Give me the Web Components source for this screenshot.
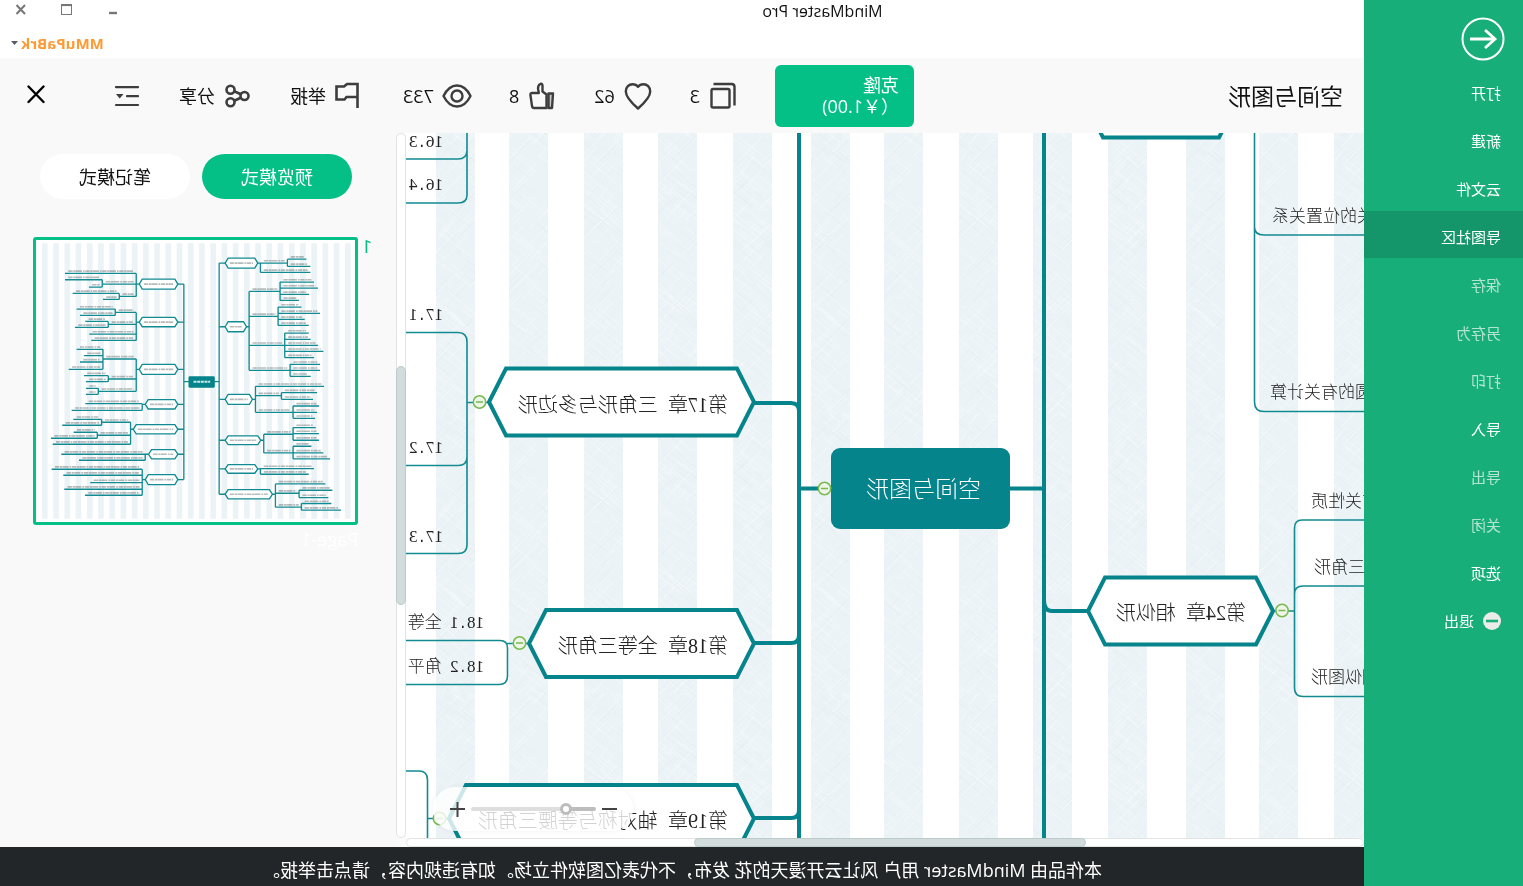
<!DOCTYPE html>
<html lang="zh-CN">
<head>
<meta charset="utf-8">
<title>MindMaster Pro</title>
<style>
  body {
    margin: 0;
    font-family: "Open Sans", "Noto Sans CJK SC", sans-serif;
    color: #111;
    background: #fff;
    transform: scaleX(-1);
  }
</style>
</head>
<body>
<mm-app></mm-app>

<script>
const define = (name, html, setup) => {
  const template = document.createElement('template');
  template.innerHTML = `<style>
    *, *::before, *::after { box-sizing: border-box; }
    button { font: inherit; color: inherit; border: 0; padding: 0; background: none; cursor: pointer; }
    svg { display: block; }
  </style>` + html;
  customElements.define(name, class extends HTMLElement {
    constructor() {
      super();
      this.attachShadow({ mode: 'open' }).append(template.content.cloneNode(true));
    }
    connectedCallback() { if (setup) setup(this, this.shadowRoot); }
  });
};

/* ---------- side menu ---------- */
define('mm-menu-item', `
  <style>
    :host { display: block; height: 48px; }
    a { display: flex; align-items: center; gap: 9px; height: 47px; padding: 5px 0 0 22px;
        font-size: 15px; line-height: 20px; color: #fff; text-decoration: none; }
    :host([active]) a { background: #14956a; }
    :host([disabled]) a { color: #b4e4d2; }
  </style>
  <a href="#"><slot name="icon"></slot><slot></slot></a>`);

define('mm-sidebar', `
  <style>
    :host { display: block; flex: none; width: 159px; background: #17ae79; }
    .back { display: block; margin: 17px 0 6px 18px; width: 44px; height: 44px; }
    nav { display: block; }
  </style>
  <button class="back" aria-label="返回">
    <svg width="44" height="44" viewBox="0 0 44 44" fill="none" stroke="#fff">
      <circle cx="22" cy="22" r="20.5" stroke-width="2"/>
      <path d="M35 22H10M20 13L10 22l10 9" stroke-width="2.8"/>
    </svg>
  </button>
  <nav>
    <mm-menu-item>打开</mm-menu-item>
    <mm-menu-item>新建</mm-menu-item>
    <mm-menu-item>云文件</mm-menu-item>
    <mm-menu-item active>导图社区</mm-menu-item>
    <mm-menu-item disabled>保存</mm-menu-item>
    <mm-menu-item disabled>另存为</mm-menu-item>
    <mm-menu-item disabled>打印</mm-menu-item>
    <mm-menu-item>导入</mm-menu-item>
    <mm-menu-item disabled>导出</mm-menu-item>
    <mm-menu-item disabled>关闭</mm-menu-item>
    <mm-menu-item>选项</mm-menu-item>
    <mm-menu-item><svg slot="icon" width="18" height="18" viewBox="0 0 18 18"><circle cx="9" cy="9" r="9" fill="#ebebeb"/><path d="M3 9h12" stroke="#17ae79" stroke-width="2.6"/></svg>退出</mm-menu-item>
  </nav>`);

/* ---------- title bar ---------- */
define('mm-titlebar', `
  <style>
    :host { display: flex; height: 58px; background: #fff; }
    h1 { flex: 1; margin: 0; text-align: center; font-size: 16px; font-weight: 400; line-height: 22px; }
    .side { width: 281px; display: flex; flex-direction: column; align-items: flex-end; }
    .controls { display: flex; align-items: center; gap: 33px; height: 20px; padding-right: 15px; }
    .controls button { width: 12px; height: 12px; }
    .user { display: flex; align-items: center; gap: 2px; margin-top: 13px; padding-right: 10px;
            font-size: 15px; line-height: 20px; font-weight: 700; color: #fd9a35; }
  </style>
  <h1>MindMaster Pro</h1>
  <div class="side">
    <div class="controls">
      <button aria-label="最小化"><svg width="12" height="12"><path d="M0 9h8" stroke="#777" stroke-width="2.4"/></svg></button>
      <button aria-label="最大化"><svg width="12" height="12" fill="none" stroke="#777"><rect x=".5" y=".5" width="10" height="10"/><path d="M0 1.3h11" stroke-width="1.6"/></svg></button>
      <button aria-label="关闭窗口"><svg width="12" height="12"><path d="M2 1l8.500 9M10.500 1L2 10" stroke="#777" stroke-width="2"/></svg></button>
    </div>
    <button class="user">MMuPaBrk<svg width="9" height="5"><path d="M1 0h7L4.500 4z" fill="#555c66"/></svg></button>
  </div>`);

/* ---------- header ---------- */
define('mm-tool', `
  <style>
    :host { display: block; }
    button { display: flex; align-items: center; gap: 8px; font-size: 18px; line-height: 26px; height: 30px; }
    ::slotted(svg) { display: block; width: 30px; height: 30px; fill: none; stroke: #3d3d3d; stroke-width: 2.4; stroke-linejoin: round; }
  </style>
  <button><slot name="icon"></slot><slot></slot></button>`);

define('mm-header', `
  <style>
    :host { display: flex; align-items: center; height: 75px; padding: 0 25px 0 21px; background: #f9f9f9; }
    h2 { flex: 1; margin: 0; font-size: 23px; line-height: 30px; font-weight: 400; }
    .clone { width: 139px; height: 62px; margin-right: 37px; padding: 0 15px; border-radius: 6px; background: #04bf86;
             color: #fff; font-size: 18px; line-height: 21px; text-align: left; white-space: nowrap; }
    .group { display: flex; gap: 37px; margin-right: 39px; }
    .group + .group { margin-right: 0; }
    .close { margin-left: 65px; width: 22px; height: 22px; }
    .outline { width: 30px; height: 30px; }
  </style>
  <h2>空间与图形</h2>
  <button class="clone">克隆<br>（￥1.00)</button>
  <div class="group">
    <mm-tool><svg slot="icon" viewBox="0 0 30 30"><rect x="8.500" y="8" width="18" height="18.500" rx="1.500"/><path d="M3.500 24.500V6q0-3 3-3H24.500"/></svg>3</mm-tool>
    <mm-tool><svg slot="icon" viewBox="0 0 30 30"><path d="M15 27.500C11 24 2.800 17 2.800 10.500C2.800 6 6 3.200 9.500 3.200C12 3.200 14 4.400 15 5.800C16 4.400 18 3.200 20.500 3.200C24 3.200 27.200 6 27.200 10.500C27.200 17 19 24 15 27.500Z"/></svg>62</mm-tool>
    <mm-tool><svg slot="icon" viewBox="0 0 30 30"><path d="M4 12.500h4.500V27H5z" fill="#3d3d3d" fill-opacity=".25"/><path d="M10.500 27V13.500l4-3V5q0-2.500 1.800-2.200q2.700.7 2.700 4.700L18.200 12H25q1.800 0 1.600 1.800L25 25q-.3 2-2 2z"/></svg>8</mm-tool>
    <mm-tool><svg slot="icon" viewBox="0 0 30 30"><path d="M1.500 15C5 8 9.500 4.500 15 4.500S25 8 28.500 15C25 22 20.500 25.500 15 25.500S5 22 1.500 15z"/><circle cx="15" cy="15" r="5.500"/></svg>733</mm-tool>
  </div>
  <div class="group">
    <mm-tool><svg slot="icon" viewBox="0 0 30 30" style="stroke-linejoin:miter;stroke-width:2.600"><path d="M6.500 27V3H17L20 5.500H27.500V18.500H19.500L17.500 16H6.500"/></svg>举报</mm-tool>
    <mm-tool><svg slot="icon" viewBox="0 0 30 30" style="stroke-width:2.600"><circle cx="8.500" cy="15" r="4"/><circle cx="22.500" cy="8.800" r="4"/><circle cx="22.500" cy="21.200" r="4"/><path d="M12.200 13.300l6.600-3M12.200 16.700l6.600 3"/></svg>分享</mm-tool>
    <button class="outline" aria-label="大纲"><svg width="30" height="30" viewBox="0 0 30 30"><path d="M4 6.200h22M4 15.200h11M4 24h22" stroke="#3d3d3d" stroke-width="2.200" stroke-linecap="round"/><path d="M18.500 13h7.500l-3.700 4.500z" fill="#3d3d3d"/></svg></button>
  </div>
  <button class="close" aria-label="关闭"><svg width="22" height="22" viewBox="0 0 22 22"><path d="M3.500 1.500l15 15.500M18.500 1.500L3.500 17" stroke="#000" stroke-width="2.400" stroke-linecap="round"/></svg></button>`);

/* ---------- map canvas ---------- */
/* A label whose full stops and spaces take half an em, like its digits. */
define('mm-label', `
  <style>
    :host { position: absolute; font-family: "Liberation Serif", "Noto Sans CJK SC", serif;
            font-size: 17px; line-height: 24px; font-weight: 300; color: #222; }
    span { display: block; white-space: pre; }
    i { font-style: normal; font-family: "Liberation Mono", monospace; font-size: 14px; line-height: 1; }
    :host([kind=chapter]) { font-size: 20px; }
    :host([kind=chapter]) i { font-size: 17px; }
    :host([kind=root]) { font-size: 23px; color: #fff; }
  </style><span></span>`, (host, root) => {
    host.style.left = host.getAttribute('x') + 'px';
    host.style.top = host.getAttribute('y') - 11 + 'px';
    root.querySelector('span').innerHTML = host.getAttribute('text').replace(/[. ]/g, '<i>$&</i>');
  });

define('mm-zoom', `
  <style>
    :host { position: absolute; right: 27px; bottom: 7px; width: 200px; height: 44px; padding: 0 16px;
            display: flex; align-items: center; gap: 6px; border-radius: 22px;
            background: rgba(255,255,255,.8); box-shadow: 0 0 6px rgba(0,0,0,.06); }
    button { width: 15px; height: 15px; flex: none; }
    input { appearance: none; flex: none; width: 125px; height: 12px; margin: 0; background: none; }
    input::-webkit-slider-runnable-track { height: 4px; border-radius: 2px; background: linear-gradient(90deg, #bdbdbd 24%, #dedede 24%); }
    input::-webkit-slider-thumb { appearance: none; width: 12px; height: 12px; margin-top: -4px; border: 3px solid #bdbdbd; border-radius: 50%; background: #fff; }
  </style>
  <button aria-label="缩小"><svg width="15" height="15"><path d="M0 7h15" stroke="#444" stroke-width="2"/></svg></button>
  <input type="range" aria-label="缩放" value="21">
  <button aria-label="放大"><svg width="15" height="15"><path d="M0 7h15M7.500 0v15" stroke="#444" stroke-width="2"/></svg></button>`);

define('mm-scrollbar', `
  <style>
    :host { display: block; position: relative; background: #fff; border: 1px solid #e2e4e4; border-radius: 5px; }
    div { position: absolute; background: #d3dcdd; border: 1px solid #bccaca; border-radius: 5px; inset: -1px; }
  </style><div></div>`, (host, root) => {
    const bar = root.querySelector('div'), from = host.getAttribute('from'), to = host.getAttribute('to');
    if (host.hasAttribute('vertical')) { bar.style.top = from + '%'; bar.style.bottom = 100 - to + '%'; }
    else { bar.style.left = from + '%'; bar.style.right = 100 - to + '%'; }
  });

/* Page background: five bands to a 375px tile, with a fine cross-hatch on each. */
const hatch = () => {
  let seed = 7, d = ['', '', ''];
  const rnd = () => (seed = (seed * 16807) % 2147483647) / 2147483647;
  for (let n = 0; n < 1400; n++) {
    const x = rnd() * 400 - 20, y = rnd() * 320 - 20, l = 8 + rnd() * 20, k = rnd() < .6 ? .8 : -1;
    d[n % 3] += `M${x.toFixed(0)} ${y.toFixed(0)}l${l.toFixed(0)} ${(l * k).toFixed(0)}`;
  }
  return `<path d="${d[0]}${d[1]}" stroke="#fff" stroke-opacity=".3" fill="none"/><path d="${d[2]}" stroke="#e0e9ec" stroke-opacity=".4" fill="none"/>`;
};
const hexagon = (x1, x2, y, h, c) => `M${x1} ${y}L${x1 + c} ${y - h}H${x2 - c}L${x2} ${y}L${x2 - c} ${y + h}H${x1 + c}Z`;
const knob = (x, y) => `<g><circle cx="${x}" cy="${y}" r="6.200" fill="#edf5e8" stroke="#79b94e" stroke-width="1.500"/><path d="M${x - 3.5} ${y}h7" stroke="#79b94e" stroke-width="1.500"/></g>`;

define('mm-canvas', `
  <style>
    :host { display: grid; grid-template: 1fr 9px / 1fr 10px; flex: 1; min-width: 0; background: #fafafa; }
    .view { position: relative; overflow: hidden; background: #fff; }
    svg { position: absolute; inset: 0; width: 100%; height: 100%; }
  </style>
  <div class="view">
    <svg>
      <defs>
        <pattern id="bands" width="375" height="280" patternUnits="userSpaceOnUse" patternTransform="translate(436 133)">
          <clipPath id="strips"><path d="M0 0h39v280H0zM73 0h39v280H73zM148 0h39v280h-39zM222 0h39v280h-39zM297 0h39v280h-39z"/></clipPath>
          <g clip-path="url(#strips)"><rect width="375" height="280" fill="#ecf3f6"/>${hatch()}</g>
        </pattern>
      </defs>
      <g transform="translate(1364 -133) scale(-1 1)">
        <rect x="-2000" y="133" width="3364" height="2000" fill="url(#bands)"/>
        <g fill="none" stroke="#128a91" stroke-width="1.600">
          <path d="M1254.500 133V227Q1254.500 235 1264 235H1364M1254.500 225V402Q1254.500 411.500 1264 411.500H1364"/>
          <path d="M1364 520H1302Q1294.500 520 1294.500 528V688Q1294.500 696.500 1303 696.500H1364M1294.500 594Q1294.500 586 1303 586H1364M1274 611h20"/>
          <path d="M467 133V195Q467 203 458 203H406M467 150Q467 159 458 159H406"/>
          <path d="M406 332.500H458Q467 332.500 467 342V545Q467 553.500 458 553.500H406M467 457Q467 465.500 458 465.500H406M467 402.500h22"/>
          <path d="M406 640.500H500Q507.500 640.500 507.500 648V676Q507.500 684.500 499 684.500H406M507 643.500h22"/>
          <path d="M406 771H419Q427.500 771 427.500 780V838M427 818.500h20"/>
        </g>
        <g fill="none" stroke="#05848c" stroke-width="4">
          <path d="M799 133V838M1044 133V838M799 488.500H832M1008 488.500H1044"/>
          <path d="M755 403H791Q799 403 799 411M755 643H791Q799 643 799 635M755 818H791Q799 818 799 810M1044 600Q1044 611 1052 611H1087"/>
          <g fill="#fff">
            <path d="${hexagon(489, 754, 402, 33.5, 17)}"/>
            <path d="${hexagon(529, 754, 643.5, 33.5, 17)}"/>
            <path d="${hexagon(449, 754, 818.5, 33.5, 17)}"/>
            <path d="${hexagon(1088, 1273, 611, 33.5, 17)}"/>
            <path d="${hexagon(1086, 1236, 104, 33.5, 17)}"/>
          </g>
        </g>
        <rect x="831" y="448" width="179" height="81" rx="9" fill="#05848c"/>
        ${knob(479.5, 402)}${knob(519.5, 643)}${knob(439.5, 818.5)}${knob(824.5, 488.5)}${knob(1282, 610.5)}
      </g>
    </svg>
    <mm-label kind="root" x="383" y="356" text="空间与图形"></mm-label>
    <mm-label kind="chapter" x="636" y="271" text="第17章 三角形与多边形"></mm-label>
    <mm-label kind="chapter" x="636" y="512" text="第18章 全等三角形"></mm-label>
    <mm-label kind="chapter" x="636" y="687" text="第19章 轴对称与等腰三角形"></mm-label>
    <mm-label kind="chapter" x="118" y="479" text="第24章 相似形"></mm-label>
    <mm-label x="921" y="8" text="16.3"></mm-label>
    <mm-label x="921" y="51" text="16.4"></mm-label>
    <mm-label x="921" y="181" text="17.1"></mm-label>
    <mm-label x="921" y="314" text="17.2"></mm-label>
    <mm-label x="921" y="403" text="17.3"></mm-label>
    <mm-label x="880" y="489" text="18.1 全等"></mm-label>
    <mm-label x="880" y="533" text="18.2 角平"></mm-label>
    <mm-label x="-10" y="83" text="关的位置关系"></mm-label>
    <mm-label x="-8" y="259" text="圆的有关计算"></mm-label>
    <mm-label x="-15" y="368" text="有关性质"></mm-label>
    <mm-label x="-1" y="434" text="三角形"></mm-label>
    <mm-label x="-15" y="544" text="相似图形"></mm-label>
    <mm-zoom></mm-zoom>
  </div>
  <mm-scrollbar vertical from="33" to="67"></mm-scrollbar>
  <mm-scrollbar from="29" to="70"></mm-scrollbar>`);

/* ---------- page overview ---------- */
/* Each branch: [x of its bracket, [[end of line, y, sub-bracket?], ...]] */
const overview = [
  [358, 474, 177, 15, [349, [[135, 145], [247, 177, [247, [[135, 164], [207, 186]]]], [298, 214, [298, [[158, 205], [249, 223]]]]]]],
  [358, 474, 291, 14, [349, [[286, 262, [286, [[170, 252], [180, 271]]]], [265, 298, [265, [[196, 289], [165, 307]]]], [208, 327], [214, 346]]]],
  [358, 474, 433, 15, [349, [[249, 402, [249, [[170, 373], [192, 392], [180, 411], [146, 433]]]], [265, 462, [265, [[192, 452], [198, 470]]]], [235, 499, [235, [[198, 490], [198, 508]]]]]]],
  [376, 474, 538, 14, [367, [[196, 536], [155, 556]]]],
  [340, 474, 613, 14, [332, [[245, 592, [245, [[160, 583], [127, 601]]]], [232, 631, [232, [[161, 622], [93, 640]]]], [98, 658]]]],
  [386, 474, 688, 14, [376, [[124, 688], [177, 706]]]],
  [376, 474, 764, 15, [367, [[95, 733], [130, 751], [211, 773], [133, 793], [195, 811]]]],
  [616, 714, 114, 15, [722, [[803, 114, [803, [[860, 102], [872, 124]]]], [872, 142]]]],
  [616, 680, 305, 15, [688, [[781, 199, [781, [[883, 171], [895, 189], [868, 208], [838, 226]]]], [775, 274, [775, [[845, 246], [901, 265], [855, 283], [867, 301]]]], [795, 361, [795, [[867, 324], [873, 343], [895, 361], [911, 379], [883, 398]]]], [811, 436, [811, [[901, 418], [901, 436], [873, 454]]]]]]],
  [616, 698, 523, 15, [707, [[913, 484], [785, 512, [785, [[892, 503], [880, 523]]]], [820, 562, [820, [[898, 543], [892, 562], [886, 580]]]]]]],
  [616, 723, 646, 13, [732, [[820, 628, [820, [[888, 608], [898, 626], [898, 646]]]], [820, 684, [820, [[875, 664], [911, 684], [931, 702]]]]]]],
  [616, 714, 732, 13, [722, [[883, 731], [867, 748]]]],
  [616, 758, 808, 14, [767, [[917, 777], [838, 805, [838, [[938, 796], [926, 818]]]], [845, 847, [845, [[935, 836], [964, 856]]]]]]]
];
const overviewSvg = () => {
  let lines = '', words = '', shapes = '', bands = '';
  const walk = ([x, rows]) => {
    lines += `M${x} ${rows[0][1]}V${rows[rows.length - 1][1]}`;
    for (const [end, y, sub] of rows) {
      lines += `M${x} ${y}H${end}`;
      const a = Math.min(x, end), b = Math.max(x, end);
      words += `M${a + 10} ${y - 7}H${b - 8}`;
      if (sub) walk(sub);
    }
  };
  for (const [a, b, y, h, tree] of overview) {
    const left = b < 500;
    lines += left ? `M${b} ${y}H492M${a} ${y}H${tree[0]}` : `M${a} ${y}H598M${b} ${y}H${tree[0]}`;
    shapes += hexagon(a, b, y, h, 9);
    words += `M${a + 14} ${y}H${b - 14}`;
    walk(tree);
  }
  for (let n = 0; n < 28; n++) bands += `M${66 + n * 33.7} 54h17v828h-17z`;
  return `<path d="${bands}" fill="#ebf3f6"/>
    <path d="${lines}M492 177V764M598 114V808M492 470H598" fill="none" stroke="#128a91" stroke-width="4"/>
    <path d="${shapes}" fill="#fff" stroke="#128a91" stroke-width="4"/>
    <rect x="506" y="454" width="79" height="34" rx="4" fill="#05848c"/>
    <path d="${words}" fill="none" stroke="#4a5558" stroke-opacity=".4" stroke-width="5" stroke-dasharray="13 2 7 1 18 3 5 2"/>
    <path d="M521 470H571" stroke="#fff" stroke-width="6" stroke-opacity=".8" stroke-dasharray="9 2"/>`;
};

define('mm-panel', `
  <style>
    :host { display: block; flex: none; width: 396px; padding: 21px 24px 0; background: #f9f9f9; }
    .tabs { display: flex; gap: 12px; padding-left: 20px; margin-bottom: 38px; }
    .tabs button { width: 150px; height: 45px; border-radius: 23px; background: #fff; font-size: 18px; line-height: 26px; }
    .tabs button[aria-selected=true] { background: #04bf86; color: #fff; }
    .page { display: grid; grid-template-columns: 14px 325px; }
    .number { color: #04bf86; font-size: 18px; line-height: 20px; font-family: Roboto, sans-serif; }
    .thumb { display: block; height: 288px; border: 3px solid #04bf86; border-radius: 3px; background: #fff; }
    .name { grid-column: 2; color: #fff; font-size: 18px; line-height: 28px; }
  </style>
  <div class="tabs" role="tablist">
    <button role="tab" aria-selected="true">预览模式</button>
    <button role="tab" aria-selected="false">笔记模式</button>
  </div>
  <div class="page">
    <span class="number">1</span>
    <button class="thumb" aria-label="Page-1"><svg width="319" height="282" viewBox="0 0 958 846"><g transform="translate(1006 -45) scale(-1 1)">${overviewSvg()}</g></svg></button>
    <span class="name">Page-1</span>
  </div>`);

define('mm-notice', `
  <style>
    :host { display: block; height: 39px; background: #222628; color: #fff; text-align: center;
            font-size: 18px; line-height: 47px; white-space: nowrap; overflow: hidden; }
  </style>
  本作品由 MindMaster 用户 风让云开漫天的花 发布，不代表亿图软件立场。如有违规内容，请点击举报。`);

define('mm-app', `
  <style>
    :host { display: flex; min-height: 100vh; }
    main { flex: 1; min-width: 0; display: flex; flex-direction: column; }
    .work { flex: 1; display: flex; min-height: 480px; }
  </style>
  <mm-sidebar></mm-sidebar>
  <main>
    <mm-titlebar></mm-titlebar>
    <mm-header></mm-header>
    <div class="work">
      <mm-canvas></mm-canvas>
      <mm-panel></mm-panel>
    </div>
    <mm-notice></mm-notice>
  </main>`);
</script>
</body>
</html>
